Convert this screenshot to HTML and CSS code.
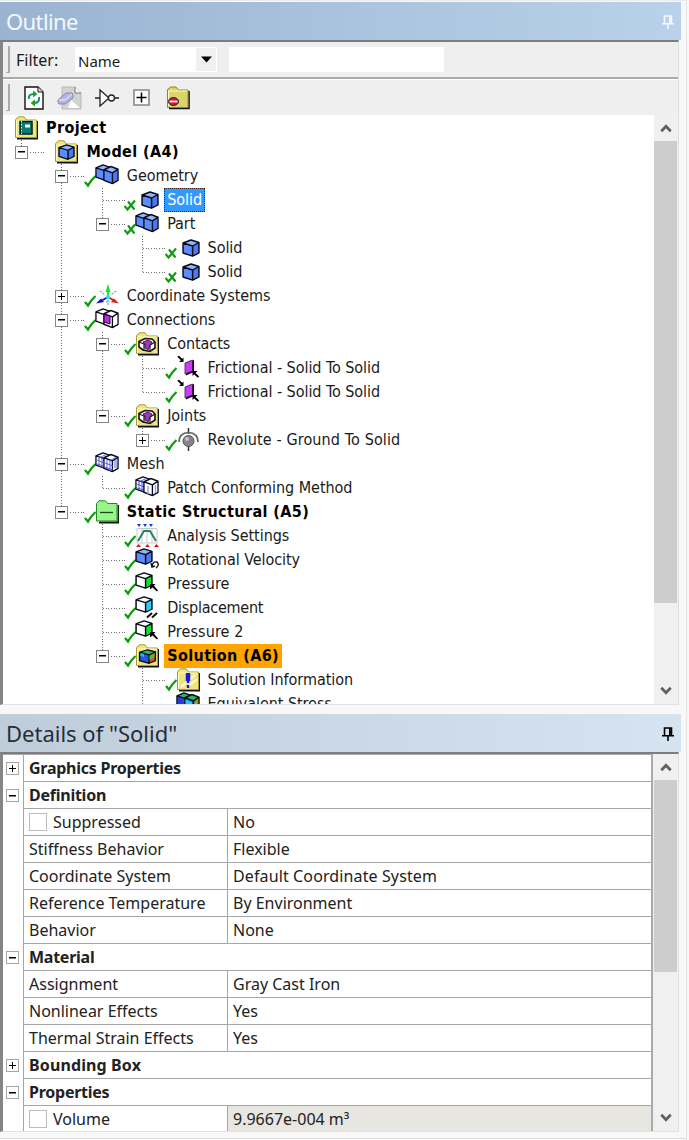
FILE: index.html
```html
<!DOCTYPE html>
<html lang="en">
<head>
<meta charset="utf-8">
<title>Outline</title>
<link rel="stylesheet" href="styles.css">
</head>
<body>
<svg class="defs" aria-hidden="true">
  <symbol id="cube" viewBox="0 0 17 18" preserveAspectRatio="none">
    <path class="face" d="M1 4 8.500 1 16 3.500V14L10 17.200 1 14Z"/>
    <path class="top" d="M1 4 8.500 1 16 3.500 10 7Z"/>
    <path class="side" d="M10 7 16 3.500V14L10 17.200Z"/>
    <path class="ink" d="M1 4 8.500 1 16 3.500V14L10 17.200 1 14ZM1 4 10 7 16 3.500M10 7V17"/>
  </symbol>
  <symbol id="tick" viewBox="0 0 12 24"><path d="M1 18 4 21.500Q7 16 11.500 12" fill="none" stroke="#0a9a0a" stroke-width="2.300"/></symbol>
  <symbol id="tickx" viewBox="0 0 12 24"><path d="M.5 18 3.500 21.500 11 12.500M4 13.500 10.500 21.500" fill="none" stroke="#129a12" stroke-width="2.200"/></symbol>
  <symbol id="folder" viewBox="0 0 24 24">
    <path d="M3 22.500H23.500V5" fill="none" stroke="#111" stroke-width="1.800"/>
    <path d="M1.500 21.500V3.500L4.500 .8H10L12.500 4H22.500V21.500Z" fill="#eee482" stroke="#a99a32"/>
    <path d="M2.500 20.500V5H21.500" fill="none" stroke="#fffbc4"/>
  </symbol>
  <symbol id="twocubes" viewBox="0 0 24 24">
    <use href="#cube" x="0" y="0" width="16" height="17"/><use href="#cube" x="8" y="1.500" width="16" height="19"/>
  </symbol>
  <symbol id="meshlines" viewBox="0 0 24 24"><path d="M4 4v10M7 5v10M2 8l7 3M2 12l7 2M12 8v9M15 9v10M10 11l8 3M10 15l8 3M20 8v8M22 7v9M12 2l-8 4M22 5l-8 4" stroke="#4b50e8" stroke-width=".9"/></symbol>
  <symbol id="arrow" viewBox="0 0 8 8"><path d="M0 0H5.500L4 1.800 8 6.500 7 7.500 2.500 3.500 0 5.500Z" fill="#000"/></symbol>
  <symbol id="pressure" viewBox="0 0 24 24"><use href="#cube" x="0" y="0" width="18" height="17"/><use href="#arrow" x="15" y="12" width="8" height="8"/></symbol>
  <symbol id="contact" viewBox="0 0 24 24">
    <path d="M10 7 18 4V16L10 19.500Z" fill="#111"/><path d="M9 7 16.500 4V15L9 18Z" fill="#c93bf4" stroke="#40104f" stroke-width=".8"/>
    <path d="M2 0 6 4" stroke="#000" stroke-width="1.800"/><path d="M3 6H7.500V1.500Z"/>
    <path d="M22.500 21 18 17" stroke="#000" stroke-width="1.800"/><path d="M16.500 20V15h5Z"/>
  </symbol>
  <symbol id="connfolder" viewBox="0 0 24 24"><use href="#folder" width="24" height="24"/><path d="M4 9.500 10 6.500 17 7 20 10V16L15 19.500 8 18 4 15Z" fill="#fff" stroke="#1b1020" stroke-width="1.600"/><path d="M4 10 9 12 15 13 20 10M9 12v6M15 13v6" fill="none" stroke="#1b1020" stroke-width="1.200"/><path d="M8 10 13 8 17 10 15 13 13 18 10 16V12Z" fill="#a635b7" stroke="#23052b" stroke-width=".8"/></symbol>
  <symbol id="pin" viewBox="0 0 12 14"><path d="M2.500 8.500V1H9.500V8.500M0 8.800H12M6 9V14M7.800 1V8" fill="none" stroke="currentColor" stroke-width="1.600"/></symbol>
  <symbol id="up" viewBox="0 0 12 10"><path d="M1.300 8.300 6 3.300 10.700 8.300" fill="none" stroke="#606060" stroke-width="2.800"/></symbol>
  <symbol id="down" viewBox="0 0 12 10"><path d="M1.300 1.700 6 6.700 10.700 1.700" fill="none" stroke="#606060" stroke-width="2.800"/></symbol>
</svg>

<div class="app">
  <section class="outline">
    <header class="title title-active"><h1>Outline</h1><svg class="pin"><use href="#pin"/></svg></header>
    <div class="frame">
      <div class="bar filter">
        <i class="grip"></i><label>Filter:</label>
        <div class="combo"><span>Name</span><b><svg width="11" height="7"><path d="M0 .5H11L5.500 6.500Z"/></svg></b></div>
        <div class="search"></div>
      </div>
      <div class="bar tools">
        <i class="grip"></i>
        <svg class="tool-a" width="22" height="24" viewBox="0 0 22 24"><path d="M2 1H15L20 6V23H2Z" fill="#fff" stroke="#111" stroke-width="1.400"/><path d="M15 1V6H20" fill="#ddd" stroke="#111"/><path d="M6 13Q5 8 11 8" fill="none" stroke="#1b8b87" stroke-width="2"/><path d="M10 4.500 14.500 8 10 11.500Z" fill="#19a31d"/><path d="M16 11Q17 17 11 17" fill="none" stroke="#1b8b87" stroke-width="2"/><path d="M12 13.500 7.500 17 12 20.500Z" fill="#19a31d"/></svg>
        <svg class="tool-b" width="26" height="24" viewBox="0 0 26 24"><path d="M5 1H18L24 7V23H5Z" fill="#d2d2d2" stroke="#bbb"/><path d="M18 1V7H24" fill="#fafafa" stroke="#777"/><path d="M14 14 23 22H11Z" fill="#fff"/><path d="M1 14 9 7H15L16 9V12L8 18H2L1 16Z" fill="#b6b6e4" stroke="#8585b5"/><path d="M2 14H8L15 8" fill="none" stroke="#eef"/></svg>
        <svg class="tool-c" width="26" height="20" viewBox="0 0 26 20"><path d="M1 10H6M6 2V18L15 10ZM20 10H25" fill="#fff" stroke="#222" stroke-width="1.300"/><circle cx="17.500" cy="10" r="3" fill="#fff" stroke="#222" stroke-width="1.300"/></svg>
        <svg class="tool-d" width="17" height="17" viewBox="0 0 17 17"><path d="M1 1H16V16H1Z" fill="#fff" stroke="#888" stroke-width="1.600"/><path d="M3.500 8.500H13.500M8.500 3.500V13.500" stroke="#000" stroke-width="1.500"/></svg>
        <svg class="tool-e" width="24" height="24" viewBox="0 0 24 24"><path d="M3 22.500H23V5" fill="none" stroke="#111" stroke-width="1.600"/><path d="M1.500 21.500V3.500L4.500 1H10L12.500 4H22V21.500Z" fill="#d9d46c" stroke="#8d8628"/><path d="M2.500 20V5H21" fill="none" stroke="#fffcc0"/><ellipse cx="7.500" cy="15.500" rx="5" ry="4" fill="#d8123c" stroke="#222"/><path d="M3.500 15.500h8" stroke="#fff" stroke-width="1.700"/></svg>
      </div>
      <div class="pane">
        <div class="tree">
          <div class="row"><svg class="ic"><use href="#folder"/><path d="M6 5.500H18V18H6Z" fill="#087b78" stroke="#021d1d" stroke-width="1.500"/><path d="M7.500 5V18" stroke="#cff" stroke-dasharray="1.500 1.500"/><path d="M11 8.500h5v3h-5Z" fill="#f8f6d0"/></svg><span class="strong">Project</span></div>
          <div class="row"><i class="l"><b class="ex"></b></i><svg class="ic blue"><use href="#folder"/><use href="#cube" x="4" y="4" width="17" height="16"/></svg><span class="strong">Model (A4)</span></div>
          <div class="row"><i></i><i class="t"><b class="ex"></b><svg class="tk"><use href="#tick"/></svg></i><svg class="ic blue"><use href="#twocubes"/></svg><span>Geometry</span></div>
          <div class="row"><i></i><i class="v"></i><i class="t"><svg class="tk"><use href="#tickx"/></svg></i><svg class="ic blue"><use href="#cube" x="6" y="3" width="18" height="18"/></svg><span class="selected">Solid</span></div>
          <div class="row"><i></i><i class="v"></i><i class="l"><b class="ex"></b><svg class="tk"><use href="#tickx"/></svg></i><svg class="ic blue"><use href="#twocubes"/></svg><span>Part</span></div>
          <div class="row"><i></i><i class="v"></i><i></i><i class="t"><svg class="tk"><use href="#tickx"/></svg></i><svg class="ic blue"><use href="#cube" x="6" y="3" width="18" height="18"/></svg><span>Solid</span></div>
          <div class="row"><i></i><i class="v"></i><i></i><i class="l"><svg class="tk"><use href="#tickx"/></svg></i><svg class="ic blue"><use href="#cube" x="6" y="3" width="18" height="18"/></svg><span>Solid</span></div>
          <div class="row"><i></i><i class="t"><b class="ex plus"></b><svg class="tk"><use href="#tick"/></svg></i><svg class="ic"><path d="M13 14V5" stroke="#18e428" stroke-width="2"/><path d="M13 0 15.500 8H10.500Z" fill="#18e428"/><path d="M13 13 5 17.500" stroke="#1010e0" stroke-width="2"/><path d="M1 19.500 6 14.500 9 18Z" fill="#1010e0"/><path d="M13 13 20 17" stroke="#df1a1a" stroke-width="2"/><path d="M24 19.500 16 18 19 14.500Z" fill="#df1a1a"/><path d="M5 7 10 11M21 7 16 11M13 16V22M11 18h4" stroke="#999" stroke-width="1.200" stroke-dasharray="2 1"/><circle cx="13" cy="13" r="2.200" fill="#27e2e8"/></svg><span>Coordinate Systems</span></div>
          <div class="row"><i></i><i class="t"><b class="ex"></b><svg class="tk"><use href="#tick"/></svg></i><svg class="ic white"><use href="#twocubes"/><path d="M9 6.500 15 8V16L9 14Z" fill="#b52ce8" stroke="#24042d"/></svg><span>Connections</span></div>
          <div class="row"><i></i><i class="v"></i><i class="t"><b class="ex"></b><svg class="tk"><use href="#tick"/></svg></i><svg class="ic"><use href="#connfolder"/></svg><span>Contacts</span></div>
          <div class="row"><i></i><i class="v"></i><i class="v"></i><i class="t"><svg class="tk"><use href="#tick"/></svg></i><svg class="ic"><use href="#contact"/></svg><span>Frictional - Solid To Solid</span></div>
          <div class="row"><i></i><i class="v"></i><i class="v"></i><i class="l"><svg class="tk"><use href="#tick"/></svg></i><svg class="ic"><use href="#contact"/></svg><span>Frictional - Solid To Solid</span></div>
          <div class="row"><i></i><i class="v"></i><i class="l"><b class="ex"></b><svg class="tk"><use href="#tick"/></svg></i><svg class="ic"><use href="#connfolder"/></svg><span>Joints</span></div>
          <div class="row"><i></i><i class="v"></i><i></i><i class="l"><b class="ex plus"></b><svg class="tk"><use href="#tick"/></svg></i><svg class="ic"><path d="M12.500 0V6M12.500 17V23" stroke="#333" stroke-width="1.500"/><path d="M3 14Q3 5 12.500 4.500 22 5 22 14" fill="none" stroke="#666" stroke-width="1.700"/><circle cx="12.500" cy="13" r="5.500" fill="#858585" stroke="#555"/><circle cx="11" cy="11" r="2" fill="#c8c8c8"/></svg><span class="wide">Revolute - Ground To Solid</span></div>
          <div class="row"><i></i><i class="t"><b class="ex"></b><svg class="tk"><use href="#tick"/></svg></i><svg class="ic white"><use href="#twocubes"/><use href="#meshlines"/></svg><span>Mesh</span></div>
          <div class="row"><i></i><i class="v"></i><i class="l"><svg class="tk"><use href="#tick"/></svg></i><svg class="ic white"><use href="#cube" x="0" y="0" width="16" height="17"/><path d="M4 4v10M7 5v10M2 8l7 3M2 12l7 2M12 2l-8 4" stroke="#4b50e8"/><use href="#cube" x="8" y="1.500" width="16" height="19"/><path d="M13 10V18M20.500 9v8" stroke="#9ea3ee" stroke-width="1.500"/></svg><span>Patch Conforming Method</span></div>
          <div class="row"><i></i><i class="l"><b class="ex"></b><svg class="tk"><use href="#tick"/></svg></i><svg class="ic"><path d="M4 22.500H23.500V5" fill="none" stroke="#061c06" stroke-width="2"/><path d="M1.500 21V3.500L4 .8H10L13 3.500H22V21Z" fill="#98f58c" stroke="#258425"/><path d="M5 12.500H18" stroke="#174c17" stroke-width="1.300"/></svg><span class="strong">Static Structural (A5)</span></div>
          <div class="row"><i></i><i></i><i class="t"><svg class="tk"><use href="#tick"/></svg></i><svg class="ic"><path d="M2 4.500H22V19H2ZM7 4v15M17 4v15M12 4v15" fill="#fff" stroke="#c9c9c9"/><path d="M3 17 9 7H15L21 17" fill="none" stroke="#248268" stroke-width="2"/><path d="M2 0h4L4 3ZM8 0h4l-2 3ZM14 0h4l-2 3Z" fill="#173fd5"/><path d="M1 23h5L3.500 20ZM10 23h5l-2.500-3ZM19 23h5l-2.500-3Z" fill="#c51c1c"/></svg><span>Analysis Settings</span></div>
          <div class="row"><i></i><i></i><i class="t"><svg class="tk"><use href="#tick"/></svg></i><svg class="ic blue"><use href="#cube" x="0" y="0" width="18" height="17"/><path d="M17 18Q18 13 22 14 25 17 21 20M16 15l1 4 3-1" fill="none" stroke="#111" stroke-width="1.400"/></svg><span>Rotational Velocity</span></div>
          <div class="row"><i></i><i></i><i class="t"><svg class="tk"><use href="#tick"/></svg></i><svg class="ic green"><use href="#pressure"/></svg><span class="wide">Pressure</span></div>
          <div class="row"><i></i><i></i><i class="t"><svg class="tk"><use href="#tick"/></svg></i><svg class="ic cyan"><use href="#cube" x="0" y="0" width="18" height="17"/><path d="M12 21.500 17 17M17 21.500 22 17" stroke="#111" stroke-width="2"/></svg><span class="snug">Displacement</span></div>
          <div class="row"><i></i><i></i><i class="t"><svg class="tk"><use href="#tick"/></svg></i><svg class="ic green"><use href="#pressure"/></svg><span class="wide">Pressure 2</span></div>
          <div class="row"><i></i><i></i><i class="l"><b class="ex"></b><svg class="tk"><use href="#tick"/></svg></i><svg class="ic rainbow"><use href="#folder"/><use href="#cube" x="3.500" y="5" width="18" height="15"/><path d="M5.500 9 9 10V13L5.500 12Z" fill="#18c4d8"/><path d="M14.500 12 19.500 9.500V13L14.500 16Z" fill="#31cf39"/></svg><span class="strong solution">Solution (A6)</span></div>
          <div class="row"><i></i><i></i><i></i><i class="t"><svg class="tk"><use href="#tick"/></svg></i><svg class="ic"><use href="#folder"/><path d="M5 19 19 7M10 20 21 11" stroke="#fffbd3" stroke-width="2"/><path d="M12 5V13" stroke="#1818e4" stroke-width="4.500"/><path d="M12 13V15M12 17V20" stroke="#1818e4" stroke-width="2.500"/></svg><span>Solution Information</span></div>
          <div class="row"><i></i><i></i><i></i><i class="t"></i><svg class="ic rainbow"><use href="#twocubes"/><path d="M2 5 7.500 7V14L2 13Z" fill="#233be0"/><path d="M9.500 7.500 16 10V14L9.500 12Z" fill="#21cde1"/><path d="M18.500 10 22 7V11L18.500 13Z" fill="#31cf39"/></svg><span>Equivalent Stress</span></div>
        </div>
        <div class="scroll scroll-tree"><svg><use href="#up"/></svg><div class="track"><div class="thumb"></div></div><svg><use href="#down"/></svg></div>
      </div>
    </div>
  </section>

  <section class="details">
    <header class="title"><h1>Details of "Solid"</h1><svg class="pin"><use href="#pin"/></svg></header>
    <div class="frame pane">
      <div class="grid">
        <div class="head"><b class="ex plus"></b><span>Graphics Properties</span></div>
        <div class="head"><b class="ex"></b><span>Definition</span></div>
        <div class="prop"><span><em></em>Suppressed</span><span>No</span></div>
        <div class="prop"><span>Stiffness Behavior</span><span>Flexible</span></div>
        <div class="prop"><span>Coordinate System</span><span class="loose">Default Coordinate System</span></div>
        <div class="prop"><span>Reference Temperature</span><span>By Environment</span></div>
        <div class="prop"><span>Behavior</span><span>None</span></div>
        <div class="head"><b class="ex"></b><span>Material</span></div>
        <div class="prop"><span>Assignment</span><span>Gray Cast Iron</span></div>
        <div class="prop"><span>Nonlinear Effects</span><span>Yes</span></div>
        <div class="prop"><span>Thermal Strain Effects</span><span>Yes</span></div>
        <div class="head"><b class="ex plus"></b><span class="loose">Bounding Box</span></div>
        <div class="head"><b class="ex"></b><span>Properties</span></div>
        <div class="prop"><span><em></em>Volume</span><span class="readonly">9.9667e-004 m³</span></div>
      </div>
      <div class="scroll scroll-grid"><svg><use href="#up"/></svg><div class="track"><div class="thumb"></div></div><svg><use href="#down"/></svg></div>
    </div>
  </section>
  <footer></footer>
</div>
</body>
</html>
```
FILE: styles.css
```css
* { box-sizing: border-box; }
body { margin: 0; background: #f8f8f8; color: #1a1a1a; }
.defs { position: absolute; width: 0; height: 0; }
.app { width: 687px; height: 1140px; padding-top: 1px; display: flex; flex-direction: column; border-top: 1px solid #ececec; border-right: 1px solid #e4e4e4; overflow: hidden; }
.outline { height: 703px; width: 681px; display: flex; flex-direction: column; }
.details { height: 418px; width: 681px; margin-top: 9px; display: flex; flex-direction: column; }
.title { height: 38px; flex: none; padding: 0 7px 0 6px; display: flex; align-items: center; justify-content: space-between; background: linear-gradient(90deg, #bfcddb, #d6e4f1); color: #262d36; }
.title-active { background: linear-gradient(90deg, #99b4d1, #b9d1ea); color: #f4f8fc; }
.title h1 { margin: 0; font: 400 22px/36px "Noto Sans", sans-serif; }
.title-active h1 { letter-spacing: -.6px; }
.pin { width: 12px; height: 14px; margin-top: 2px; }
.details .pin { color: #000; }
.frame { flex: 1; min-height: 0; width: 679px; border-top: 2px solid #7d7d7d; border-left: 3px solid #858585; border-right: 1px solid #dfdfdf; border-bottom: 1px solid #e2e2e2; display: flex; flex-direction: column; background: #efefef; }

.bar { display: flex; align-items: center; flex: none; font-family: "Noto Sans", sans-serif; }
.filter { height: 37px; border-bottom: 2px solid #aaa; font-size: 16px; }
.tools { height: 36px; border-top: 1px solid #fff; }
.grip { width: 4px; height: 27px; margin-left: 3px; border-right: 2px solid #aaa; border-bottom: 1px solid #aaa; }
.filter label { margin-left: 6px; width: 59px; }
.combo { width: 142px; height: 25px; background: #fff; display: flex; justify-content: space-between; align-items: center; padding: 0 1px 0 3px; font-size: 15px; }
.combo span { padding-top: 2px; }
.combo b { width: 20px; height: 23px; background: #f0f0f0; display: flex; align-items: center; justify-content: center; }
.search { margin-left: 12px; width: 215px; height: 25px; background: #fff; }
.tool-a { margin-left: 13px; }
.tool-b { margin-left: 12px; }
.tool-c { margin-left: 11px; }
.tool-d { margin-left: 13px; }
.tool-e { margin-left: 16px; }

.pane { display: flex; flex-direction: row; flex: 1; min-height: 0; }
.tree { flex: 1; background: #fff; overflow: hidden; padding: 1px 0 0 11px; font: 16px/24px "DejaVu Sans Condensed", "DejaVu Sans", sans-serif; letter-spacing: -.05px; }
.row { display: flex; height: 24px; white-space: nowrap; }
.row > i { width: 40.400px; height: 24px; flex: none; display: flex; align-items: center; padding-left: 1px; background-repeat: no-repeat; }
.v, .t, .l {
  --down: repeating-linear-gradient(#707070 0 1px, #fff 1px 2.670px);
  --across: repeating-linear-gradient(90deg, #707070 0 1px, #fff 1px 2.670px);
}
.v { background-image: var(--down); background-size: 1px 24px; background-position: 7px 0; }
.t { background-image: var(--down), var(--across); background-size: 1px 24px, 22px 1px; background-position: 7px 0, 8px 12px; }
.l { background-image: var(--down), var(--across); background-size: 1px 12px, 22px 1px; background-position: 7px 0, 8px 12px; }
.ex { width: 13px; height: 13px; flex: none; border: 1.500px solid #868686; background: linear-gradient(#000, #000) center / 7px 1.500px no-repeat, #fff; }
.ex.plus { background: linear-gradient(#000, #000) center / 7px 1px no-repeat, linear-gradient(#000, #000) center / 1px 7px no-repeat, #fff; }
.tk { width: 12px; height: 24px; margin-left: auto; margin-right: -1px; }
.ic { width: 24px; height: 24px; flex: none; margin-right: 5px; }
.row span { padding: 0 3px; }
.row .snug { letter-spacing: -.25px; }
.row .wide { letter-spacing: .13px; }
.row .strong { font-weight: 700; color: #000; letter-spacing: .4px; }
.row .selected { background: #3399ff; color: #fff; border: 1px dotted #d9822b; outline: 1px dotted #30241c; outline-offset: -1px; padding: 0 2px; line-height: 22px; }
.row .solution { background: #ffa500; }

.ink { fill: none; stroke: #080b18; stroke-width: 1.400; stroke-linejoin: round; }
.face { fill: var(--face, #fff); }
.top { fill: var(--top, #fff); }
.side { fill: var(--side, #fff); }
.blue { --face: #5c8dff; --top: #91b5ff; --side: #4c79f2; }
.white { --face: #fff; --top: #fff; --side: #fff; }
.green { --side: #10e51e; }
.cyan { --side: #27cef5; }
.rainbow { --face: #2459e8; --top: #27b765; --side: #f04324; }

.scroll { width: 24px; flex: none; display: flex; flex-direction: column; align-items: center; background: #f0f0f0; padding-right: 1px; }
.scroll > svg { width: 12px; height: 10px; margin: 8px 0; flex: none; }
.track { flex: 1; align-self: stretch; }
.thumb { background: #cdcdcd; }
.scroll-tree .thumb { height: 462px; }
.scroll-grid .thumb { height: 192px; }

.grid { flex: 1; background: #fff; overflow: hidden; font: 16px/26px "Noto Sans", sans-serif; color: #222; border-right: 2px solid #aaa; border-top: 1px solid #aaa; margin-right: 1px; }
.head, .prop { height: 27px; display: flex; }
.head { font-weight: 700; align-items: center; padding-left: 3px; letter-spacing: -.25px; }
.head span { flex: 1; margin-left: 4px; }
.grid .loose { letter-spacing: .12px; }
.details .ex { border-color: #a6a6a6; }
.prop { margin-left: 20px; }
.head span, .prop span { height: 27px; border-left: 1px solid #a6a6a6; border-bottom: 1px solid #a6a6a6; padding-left: 5px; white-space: nowrap; }
.prop span { flex: 1; }
.prop span:first-child { flex: none; width: 204px; display: flex; align-items: center; }
.prop em { width: 18px; height: 18px; border: 1px solid #bdbdbd; margin-right: 6px; }
.prop .readonly { background: #e8e6e1; }
footer { margin-top: auto; height: 2px; border-top: 1px solid #ddd; }
```
